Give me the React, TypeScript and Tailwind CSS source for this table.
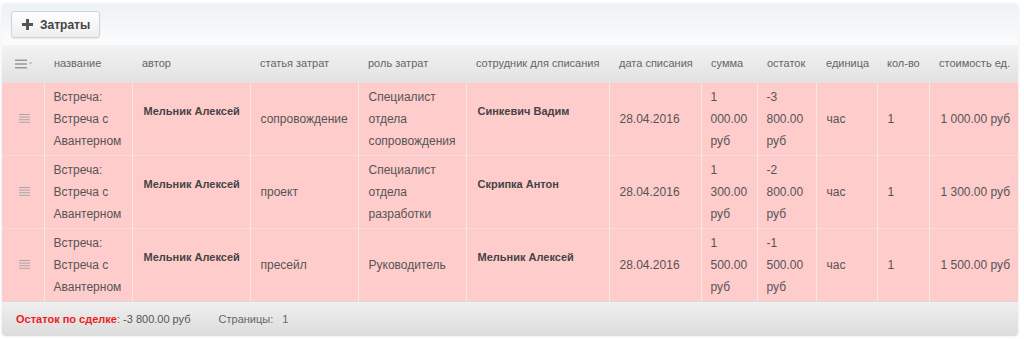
import React from "react";

const rows = [
  { author: "Мельник Алексей", article: "сопровождение", role: ["Специалист отдела сопровождения"], emp: "Синкевич Вадим", sum: "1 000.00 руб", rest: "-3 800.00 руб", price: "1 000.00 руб" },
  { author: "Мельник Алексей", article: "проект", role: ["Специалист отдела разработки"], emp: "Скрипка Антон", sum: "1 300.00 руб", rest: "-2 800.00 руб", price: "1 300.00 руб" },
  { author: "Мельник Алексей", article: "пресейл", role: ["Руководитель"], emp: "Мельник Алексей", sum: "1 500.00 руб", rest: "-1 500.00 руб", price: "1 500.00 руб" },
];

const widths = [42, 88, 118, 108, 108, 143, 92, 56, 59, 61, 52, 89];
const headers = ["", "название", "автор", "статья затрат", "роль затрат", "сотрудник для списания", "дата списания", "сумма", "остаток", "единица", "кол-во", "стоимость ед."];

function RowIcon() {
  return (
    <svg width="11" height="9" viewBox="0 0 11 9">
      <rect x="0" y="0" width="11" height="1" fill="#a8a8a8" />
      <rect x="0" y="2.6" width="11" height="1" fill="#a8a8a8" />
      <rect x="0" y="5.2" width="11" height="1" fill="#a8a8a8" />
      <rect x="0" y="7.8" width="11" height="1" fill="#a8a8a8" />
    </svg>
  );
}

function HeadIcon() {
  return (
    <svg width="20" height="10" viewBox="0 0 20 10">
      <rect x="0" y="0.5" width="12" height="1.5" fill="#999" />
      <rect x="0" y="4.25" width="12" height="1.5" fill="#999" />
      <rect x="0" y="8" width="12" height="1.5" fill="#999" />
      <path d="M14 3.5 L17 3.5 L15.5 5.5 Z" fill="#aaa" />
    </svg>
  );
}

export default function App() {
  const td = "border-r border-[#f9e6e6] pl-[9px] pr-[6px] align-middle";
  return (
    <div className="w-[1024px] h-[339px] bg-white pt-[4px] pl-[2px]" style={{ fontFamily: '"Liberation Sans", Arial, sans-serif' }}>
      <div className="w-[1016px] rounded-[4px] shadow-[0_0_3px_rgba(0,0,0,0.12)] overflow-hidden">
        <div className="h-[41px] bg-gradient-to-b from-[#edf2f5] to-[#fbfcfd] pl-[9px] pt-[7px]">
          <button className="h-[27px] w-[89px] rounded-[3px] border border-[#d2d2d2] bg-gradient-to-b from-[#ffffff] to-[#eeeeee] shadow-[0_1px_1px_rgba(0,0,0,0.08)] flex items-center pl-[10px] gap-[7px] text-[12px] font-bold text-[#444]">
            <svg width="11" height="11" viewBox="0 0 11 11">
              <rect x="4" y="0" width="3" height="11" fill="#555" />
              <rect x="0" y="4" width="11" height="3" fill="#555" />
            </svg>
            Затраты
          </button>
        </div>
        <table className="table-fixed border-collapse text-[12px] leading-[22px]" style={{ width: 1016 }}>
          <colgroup>
            {widths.map((w, i) => (
              <col key={i} style={{ width: w }} />
            ))}
          </colgroup>
          <thead>
            <tr className="h-[37px] bg-gradient-to-b from-[#f3f3f3] to-[#e2e2e2]">
              {headers.map((h, i) => (
                <th key={i} className={`font-normal text-[11px] text-left text-[#666] align-middle whitespace-nowrap ${i === 0 ? "pl-[13px]" : "pl-[10px]"}`}>
                  {i === 0 ? <div className="flex pt-[1px]"><HeadIcon /></div> : h}
                </th>
              ))}
            </tr>
          </thead>
          <tbody>
            {rows.map((r, i) => (
              <tr key={i} className="h-[73px] bg-[#ffcccc] border-t border-[#f5dcdc] text-[#555]">
                <td className={`${td} pl-[17px]`}>
                  <div className="flex"><RowIcon /></div>
                </td>
                <td className={td}>Встреча: Встреча с Авантерном</td>
                <td className={`${td} pl-[11px] pb-[16px] font-bold text-[11px] text-[#444] whitespace-nowrap`}>{r.author}</td>
                <td className={`${td} pl-[10px]`}>{r.article}</td>
                <td className={`${td} pl-[10px]`}>{r.role}</td>
                <td className={`${td} pl-[11px] pb-[16px] font-bold text-[11px] text-[#444] whitespace-nowrap`}>{r.emp}</td>
                <td className={`${td} pl-[10px]`}>28.04.2016</td>
                <td className={td}>{r.sum}</td>
                <td className={td}>{r.rest}</td>
                <td className={`${td} pl-[10px]`}>час</td>
                <td className={`${td} pl-[10px]`}>1</td>
                <td className={`${td} pl-[11px] pr-[2px] border-r-0 whitespace-nowrap`}>{r.price}</td>
              </tr>
            ))}
          </tbody>
        </table>
        <div className="h-[35px] border-t border-[#d9d9d9] bg-gradient-to-b from-[#efefef] to-[#dcdcdc] flex items-center pl-[14px] text-[11px] text-[#555]">
          <span className="font-bold text-[#ee1c1c]">Остаток по сделке</span>
          <span>: -3 800.00 руб</span>
          <span className="ml-[28px] text-[#666]">Страницы:</span>
          <span className="ml-[9px] text-[#666]">1</span>
        </div>
      </div>
    </div>
  );
}
